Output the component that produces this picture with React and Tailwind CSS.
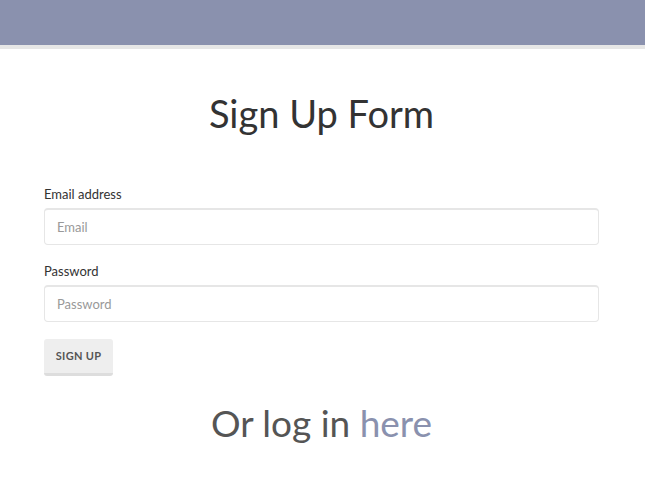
export default function App() {
  return (
    <div
      className="min-h-screen bg-white"
      style={{ fontFamily: '"Source Sans Pro", Lato, "Noto Sans", sans-serif' }}
    >
      {/* Top bar */}
      <header className="h-[49px] bg-[#8a91ae] border-b-4 border-[#e6e6e6]" />

      <main className="pl-[44px] pr-[46px]">
        <h1 className="mt-[40px] text-center text-[38px] leading-[48px] text-[#333]">
          Sign Up Form
        </h1>

        <form className="mt-[48px]" onSubmit={(e) => e.preventDefault()}>
          <label className="block text-[13px] leading-[18px] text-[#333]">
            Email address
          </label>
          <input
            type="email"
            placeholder="Email"
            className="mt-[5px] block h-[37px] w-full rounded-[4px] border border-[#e6e6e6] border-t-2 px-3 text-[13px] text-[#333] placeholder:text-[#999] outline-none"
          />

          <label className="mt-[17px] block text-[13px] leading-[18px] text-[#333]">
            Password
          </label>
          <input
            type="password"
            placeholder="Password"
            className="mt-[5px] block h-[37px] w-full rounded-[4px] border border-[#e6e6e6] border-t-2 px-3 text-[13px] text-[#333] placeholder:text-[#999] outline-none"
          />

          <button
            type="submit"
            className="mt-[17px] h-[37px] w-[69px] rounded-[3px] bg-[#eeeeee] border-b-[3px] border-[#dddddd] text-[11px] font-bold tracking-[0.3px] text-[#555]"
          >
            SIGN UP
          </button>
        </form>

        <p className="mt-[25px] text-center text-[37px] leading-[44px] text-[#555]">
          Or log in{" "}
          <a href="#login" className="text-[#8a91ae]">
            here
          </a>
        </p>
      </main>
    </div>
  );
}
